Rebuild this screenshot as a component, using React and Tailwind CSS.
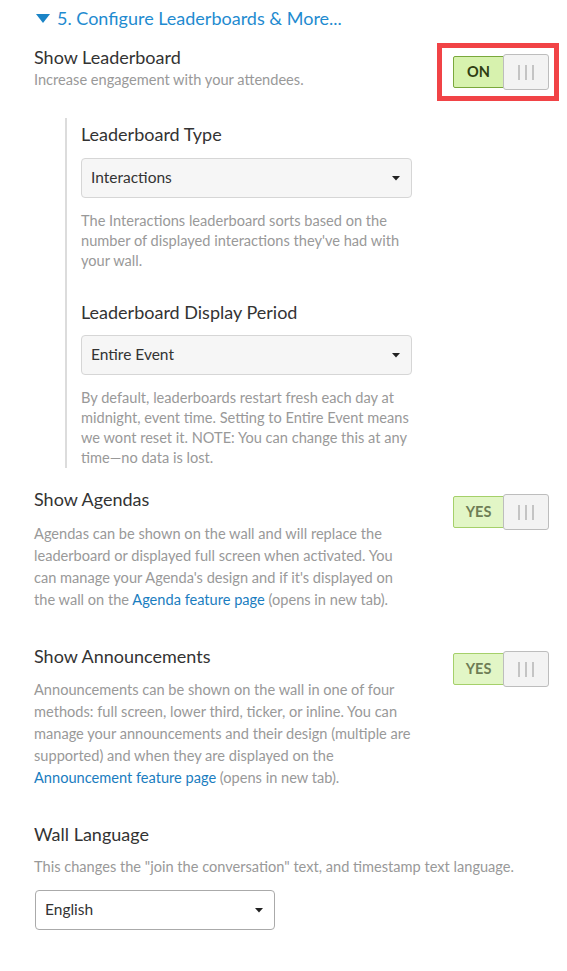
import React from "react";

function Caret() {
  return (
    <svg width="8" height="5" viewBox="0 0 8 5" className="shrink-0">
      <path d="M0 0 L8 0 L4 4.5 Z" fill="#222" />
    </svg>
  );
}

function Select({ value, className }) {
  return (
    <div className={"flex items-center justify-between h-[40px] rounded-[4px] pl-[9px] pr-[11px] " + className}>
      <span className="text-[15.5px] text-[#333]">{value}</span>
      <Caret />
    </div>
  );
}

function Toggle({ label, strong }) {
  return (
    <div className="flex items-center">
      <div
        className={
          "flex items-center justify-center w-[51px] h-[32px] border rounded-l-[2px] text-[14.5px] font-bold " +
          (strong
            ? "bg-[#d7f2ae] border-[#7aa83c] text-[#2f3d12]"
            : "bg-[#e2f6c6] border-[#a5d06a] text-[#6e7d55]")
        }
      >
        {label}
      </div>
      <div className="-ml-px flex items-center justify-center gap-[5px] w-[46px] h-[36px] bg-[#f3f3f3] border border-[#bdbdbd] rounded-[3px]">
        <span className="w-[2px] h-[15px] bg-[#c4c4c4]" />
        <span className="w-[2px] h-[15px] bg-[#c4c4c4]" />
        <span className="w-[2px] h-[15px] bg-[#c4c4c4]" />
      </div>
    </div>
  );
}

export default function App() {
  return (
    <div className="w-[567px] min-h-[971px] bg-white font-['Lato','Noto_Sans',sans-serif] text-[#333] pb-[41px]">
      {/* Header */}
      <div className="flex items-center pt-[6px] pl-[36px] h-[30px]">
        <svg width="14" height="9" viewBox="0 0 14 9" className="mr-[7px]">
          <path d="M0 0 L14 0 L7 9 Z" fill="#1b84c6" />
        </svg>
        <span className="text-[18px] leading-[24px] text-[#1f8bd0]">5. Configure Leaderboards &amp; More...</span>
      </div>

      {/* Show Leaderboard */}
      <div className="flex justify-between pl-[34px] pr-[18px] mt-[15px]">
        <div>
          <div className="text-[18px] leading-[24px]">Show Leaderboard</div>
          <div className="mt-px text-[14.6px] leading-[20px] text-[#999]">Increase engagement with your attendees.</div>
        </div>
        <div className="relative mt-[9px]">
          <Toggle label="ON" strong />
          <div className="pointer-events-none absolute -top-[11px] -bottom-[11px] -left-[16px] -right-[10px] border-[5px] border-[#f14346]" />
        </div>
      </div>

      {/* Indented block */}
      <div className="ml-[65px] mt-[28px] border-l-2 border-[#dcdcdc] pl-[14px] pt-[4px] w-[349px]">
        <div className="text-[18px] leading-[24px]">Leaderboard Type</div>
        <Select value="Interactions" className="mt-[12px] w-[331px] bg-[#f6f6f6] border border-[#d6d6d6]" />
        <p className="mt-[13px] w-[331px] text-[14.6px] leading-[20px] text-[#999]">
          The Interactions leaderboard sorts based on the number of displayed interactions they've had with your wall.
        </p>

        <div className="mt-[29px] text-[18px] leading-[24px]">Leaderboard Display Period</div>
        <Select value="Entire Event" className="mt-[11px] w-[331px] bg-[#f6f6f6] border border-[#d6d6d6]" />
        <p className="mt-[13px] w-[331px] text-[14.6px] leading-[20px] text-[#999]">
          By default, leaderboards restart fresh each day at midnight, event time. Setting to Entire Event means we wont reset it. NOTE: You can change this at any time—no data is lost.
        </p>
      </div>

      {/* Show Agendas */}
      <div className="flex justify-between pl-[34px] pr-[18px] mt-[19px]">
        <div>
          <div className="text-[18px] leading-[24px]">Show Agendas</div>
          <p className="mt-[12px] w-[382px] text-[14.6px] leading-[22px] text-[#999]">
            Agendas can be shown on the wall and will replace the leaderboard or displayed full screen when activated. You can manage your Agenda's design and if it's displayed on the wall on the{" "}
            <span className="text-[#1a7dc0] whitespace-nowrap">Agenda feature page</span> (opens in new tab).
          </p>
        </div>
        <div className="mt-[7px]">
          <Toggle label="YES" />
        </div>
      </div>

      {/* Show Announcements */}
      <div className="flex justify-between pl-[34px] pr-[18px] mt-[33px]">
        <div>
          <div className="text-[18px] leading-[24px]">Show Announcements</div>
          <p className="mt-[11px] w-[382px] text-[14.6px] leading-[22px] text-[#999]">
            Announcements can be shown on the wall in one of four methods: full screen, lower third, ticker, or inline. You can manage your announcements and their design (multiple are supported) and when they are displayed on the{" "}
            <span className="text-[#1a7dc0] whitespace-nowrap">Announcement feature page</span> (opens in new tab).
          </p>
        </div>
        <div className="mt-[7px]">
          <Toggle label="YES" />
        </div>
      </div>

      {/* Wall Language */}
      <div className="pl-[34px] mt-[33px]">
        <div className="text-[18px] leading-[24px]">Wall Language</div>
        <div className="mt-[11px] text-[14.6px] leading-[20px] text-[#999]">
          This changes the "join the conversation" text, and timestamp text language.
        </div>
        <Select value="English" className="mt-[13px] w-[240px] bg-white border border-[#aaa] ml-px" />
      </div>
    </div>
  );
}
